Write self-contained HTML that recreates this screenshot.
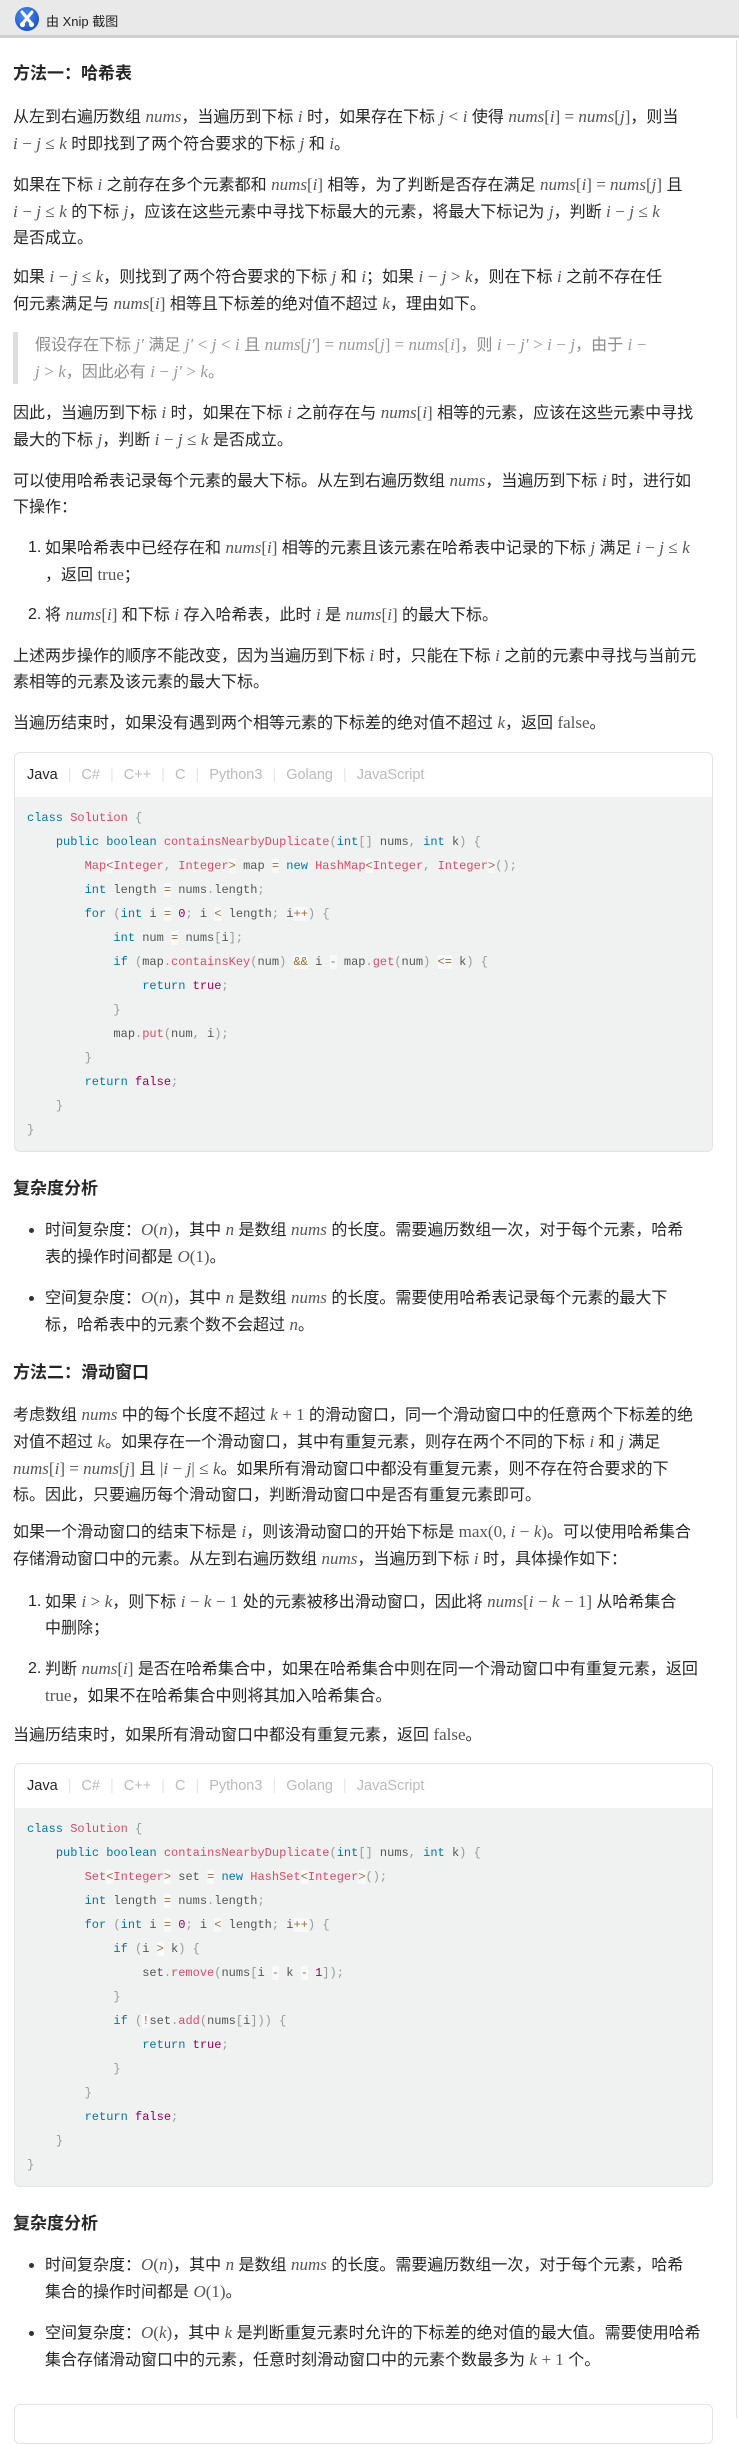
<!DOCTYPE html>
<html><head><meta charset="utf-8">
<style>
*{margin:0;padding:0;box-sizing:border-box}
body{width:739px;height:2418px;position:relative;background:#fff;font-family:"Liberation Sans","Noto Sans CJK SC",sans-serif;color:#262626;overflow:hidden}
.hdr{position:absolute;left:0;top:0;width:739px;height:38px;background:#e9e9e9;border-bottom:3px solid #cfcfcf}
.hdr .t{position:absolute;left:46px;top:11px;font-size:13px;color:#222}
.p{position:absolute;left:13px;font-size:16px;line-height:26px;white-space:nowrap}
.h{position:absolute;left:13px;font-size:17px;font-weight:bold;line-height:26px;white-space:nowrap}
.m{font-family:"Liberation Serif",serif;font-style:italic;color:#555;font-size:17px}
.r{font-family:"Liberation Serif",serif;color:#555;font-size:17px}
.bq{position:absolute;left:13px;width:5px;background:#ddd}
.bqt{color:#8c8c8c}
.bqt .m,.bqt .r{color:#999}
.cb{position:absolute;left:14px;width:699px;border:1px solid #e4e4e4;border-radius:6px;background:#f0f1f1;overflow:hidden}
.tabs{height:44px;background:#fff;font-size:14.5px;line-height:44px;padding-left:12px;color:#bbb;white-space:nowrap}
.tabs b{font-weight:normal;color:#262626}
.tabs i{font-style:normal;color:#e5e5e5;margin:0 10px}
.code{position:absolute;left:12px;font-family:"Liberation Mono","DejaVu Sans Mono",monospace;font-size:12px;line-height:24px;white-space:pre;color:#555}
.k{color:#07a}.c{color:#dd4a68}.n{color:#905}.o{color:#9a6e3a;background:rgba(255,255,255,.6)}.pu{color:#999}
.li{position:absolute;font-size:16px;line-height:26px;white-space:nowrap}
.num{position:absolute;left:28px;font-size:16px;line-height:26px}
.dot{position:absolute;left:29px;width:5px;height:5px;border-radius:50%;background:#333}
</style></head><body>
<div class="hdr">
<svg style="position:absolute;left:14px;top:6px" width="26" height="26" viewBox="0 0 26 26"><defs><radialGradient id="g" cx="40%" cy="35%" r="70%"><stop offset="0" stop-color="#4f8ff0"/><stop offset="1" stop-color="#1a4fc4"/></radialGradient></defs><circle cx="13" cy="13" r="12" fill="url(#g)"/><path d="M8 6 L17 17 M18 6 L9 17" stroke="#fff" stroke-width="3" stroke-linecap="round"/><circle cx="8.5" cy="18.5" r="2.6" fill="#fff"/><circle cx="17.5" cy="18.5" r="2.6" fill="#fff"/></svg>
<div class="t">由 Xnip 截图</div>
</div>

<div class="h" style="top:61px">方法一：哈希表</div>
<div class="p" style="top:104px">从左到右遍历数组 <span class="m">nums</span>，当遍历到下标 <span class="m">i</span> 时，如果存在下标 <span class="m">j</span> <span class="r">&lt;</span> <span class="m">i</span> 使得 <span class="m">nums</span><span class="r">[</span><span class="m">i</span><span class="r">] = </span><span class="m">nums</span><span class="r">[</span><span class="m">j</span><span class="r">]</span>，则当<br><span class="m">i</span> <span class="r">−</span> <span class="m">j</span> <span class="r">≤</span> <span class="m">k</span> 时即找到了两个符合要求的下标 <span class="m">j</span> 和 <span class="m">i</span>。</div>
<div class="p" style="top:172px">如果在下标 <span class="m">i</span> 之前存在多个元素都和 <span class="m">nums</span><span class="r">[</span><span class="m">i</span><span class="r">]</span> 相等，为了判断是否存在满足 <span class="m">nums</span><span class="r">[</span><span class="m">i</span><span class="r">] = </span><span class="m">nums</span><span class="r">[</span><span class="m">j</span><span class="r">]</span> 且<br><span class="m">i</span> <span class="r">−</span> <span class="m">j</span> <span class="r">≤</span> <span class="m">k</span> 的下标 <span class="m">j</span>，应该在这些元素中寻找下标最大的元素，将最大下标记为 <span class="m">j</span>，判断 <span class="m">i</span> <span class="r">−</span> <span class="m">j</span> <span class="r">≤</span> <span class="m">k</span><br>是否成立。</div>
<div class="p" style="top:264px">如果 <span class="m">i</span> <span class="r">−</span> <span class="m">j</span> <span class="r">≤</span> <span class="m">k</span>，则找到了两个符合要求的下标 <span class="m">j</span> 和 <span class="m">i</span>；如果 <span class="m">i</span> <span class="r">−</span> <span class="m">j</span> <span class="r">&gt;</span> <span class="m">k</span>，则在下标 <span class="m">i</span> 之前不存在任<br>何元素满足与 <span class="m">nums</span><span class="r">[</span><span class="m">i</span><span class="r">]</span> 相等且下标差的绝对值不超过 <span class="m">k</span>，理由如下。</div>
<div class="bq" style="top:332px;height:52px"></div>
<div class="p bqt" style="top:332px;left:35px">假设存在下标 <span class="m">j′</span> 满足 <span class="m">j′</span> <span class="r">&lt;</span> <span class="m">j</span> <span class="r">&lt;</span> <span class="m">i</span> 且 <span class="m">nums</span><span class="r">[</span><span class="m">j′</span><span class="r">] = </span><span class="m">nums</span><span class="r">[</span><span class="m">j</span><span class="r">] = </span><span class="m">nums</span><span class="r">[</span><span class="m">i</span><span class="r">]</span>，则 <span class="m">i</span> <span class="r">−</span> <span class="m">j′</span> <span class="r">&gt;</span> <span class="m">i</span> <span class="r">−</span> <span class="m">j</span>，由于 <span class="m">i</span> <span class="r">−</span><br><span class="m">j</span> <span class="r">&gt;</span> <span class="m">k</span>，因此必有 <span class="m">i</span> <span class="r">−</span> <span class="m">j′</span> <span class="r">&gt;</span> <span class="m">k</span>。</div>
<div class="p" style="top:400px">因此，当遍历到下标 <span class="m">i</span> 时，如果在下标 <span class="m">i</span> 之前存在与 <span class="m">nums</span><span class="r">[</span><span class="m">i</span><span class="r">]</span> 相等的元素，应该在这些元素中寻找<br>最大的下标 <span class="m">j</span>，判断 <span class="m">i</span> <span class="r">−</span> <span class="m">j</span> <span class="r">≤</span> <span class="m">k</span> 是否成立。</div>
<div class="p" style="top:468px">可以使用哈希表记录每个元素的最大下标。从左到右遍历数组 <span class="m">nums</span>，当遍历到下标 <span class="m">i</span> 时，进行如<br>下操作：</div>
<div class="num" style="top:535px">1.</div>
<div class="li" style="left:45px;top:535px">如果哈希表中已经存在和 <span class="m">nums</span><span class="r">[</span><span class="m">i</span><span class="r">]</span> 相等的元素且该元素在哈希表中记录的下标 <span class="m">j</span> 满足 <span class="m">i</span> <span class="r">−</span> <span class="m">j</span> <span class="r">≤</span> <span class="m">k</span><br>，返回 <span class="r">true</span>；</div>
<div class="num" style="top:602px">2.</div>
<div class="li" style="left:45px;top:602px">将 <span class="m">nums</span><span class="r">[</span><span class="m">i</span><span class="r">]</span> 和下标 <span class="m">i</span> 存入哈希表，此时 <span class="m">i</span> 是 <span class="m">nums</span><span class="r">[</span><span class="m">i</span><span class="r">]</span> 的最大下标。</div>
<div class="p" style="top:643px">上述两步操作的顺序不能改变，因为当遍历到下标 <span class="m">i</span> 时，只能在下标 <span class="m">i</span> 之前的元素中寻找与当前元<br>素相等的元素及该元素的最大下标。</div>
<div class="p" style="top:710px">当遍历结束时，如果没有遇到两个相等元素的下标差的绝对值不超过 <span class="m">k</span>，返回 <span class="r">false</span>。</div>

<div class="cb" style="top:752px;height:400px">
<div class="tabs"><b>Java</b><i>|</i>C#<i>|</i>C++<i>|</i>C<i>|</i>Python3<i>|</i>Golang<i>|</i>JavaScript</div>
<div class="code" style="top:53px"><span class="k">class</span> <span class="c">Solution</span> <span class="pu">{</span>
    <span class="k">public</span> <span class="k">boolean</span> <span class="c">containsNearbyDuplicate</span><span class="pu">(</span><span class="k">int</span><span class="pu">[]</span> nums<span class="pu">,</span> <span class="k">int</span> k<span class="pu">)</span> <span class="pu">{</span>
        <span class="c">Map</span><span class="o">&lt;</span><span class="c">Integer</span><span class="pu">,</span> <span class="c">Integer</span><span class="o">&gt;</span> map <span class="o">=</span> <span class="k">new</span> <span class="c">HashMap</span><span class="o">&lt;</span><span class="c">Integer</span><span class="pu">,</span> <span class="c">Integer</span><span class="o">&gt;</span><span class="pu">();</span>
        <span class="k">int</span> length <span class="o">=</span> nums<span class="pu">.</span>length<span class="pu">;</span>
        <span class="k">for</span> <span class="pu">(</span><span class="k">int</span> i <span class="o">=</span> <span class="n">0</span><span class="pu">;</span> i <span class="o">&lt;</span> length<span class="pu">;</span> i<span class="o">++</span><span class="pu">)</span> <span class="pu">{</span>
            <span class="k">int</span> num <span class="o">=</span> nums<span class="pu">[</span>i<span class="pu">];</span>
            <span class="k">if</span> <span class="pu">(</span>map<span class="pu">.</span><span class="c">containsKey</span><span class="pu">(</span>num<span class="pu">)</span> <span class="o">&amp;&amp;</span> i <span class="o">-</span> map<span class="pu">.</span><span class="c">get</span><span class="pu">(</span>num<span class="pu">)</span> <span class="o">&lt;=</span> k<span class="pu">)</span> <span class="pu">{</span>
                <span class="k">return</span> <span class="n">true</span><span class="pu">;</span>
            <span class="pu">}</span>
            map<span class="pu">.</span><span class="c">put</span><span class="pu">(</span>num<span class="pu">,</span> i<span class="pu">);</span>
        <span class="pu">}</span>
        <span class="k">return</span> <span class="n">false</span><span class="pu">;</span>
    <span class="pu">}</span>
<span class="pu">}</span></div>
</div>

<div class="h" style="top:1176px">复杂度分析</div>
<div class="dot" style="top:1228px"></div>
<div class="li" style="left:45px;top:1217px">时间复杂度：<span class="m">O</span><span class="r">(</span><span class="m">n</span><span class="r">)</span>，其中 <span class="m">n</span> 是数组 <span class="m">nums</span> 的长度。需要遍历数组一次，对于每个元素，哈希<br>表的操作时间都是 <span class="m">O</span><span class="r">(1)</span>。</div>
<div class="dot" style="top:1296px"></div>
<div class="li" style="left:45px;top:1285px">空间复杂度：<span class="m">O</span><span class="r">(</span><span class="m">n</span><span class="r">)</span>，其中 <span class="m">n</span> 是数组 <span class="m">nums</span> 的长度。需要使用哈希表记录每个元素的最大下<br>标，哈希表中的元素个数不会超过 <span class="m">n</span>。</div>

<div class="h" style="top:1360px">方法二：滑动窗口</div>
<div class="p" style="top:1402px">考虑数组 <span class="m">nums</span> 中的每个长度不超过 <span class="m">k</span> <span class="r">+ 1</span> 的滑动窗口，同一个滑动窗口中的任意两个下标差的绝<br>对值不超过 <span class="m">k</span>。如果存在一个滑动窗口，其中有重复元素，则存在两个不同的下标 <span class="m">i</span> 和 <span class="m">j</span> 满足<br><span class="m">nums</span><span class="r">[</span><span class="m">i</span><span class="r">] = </span><span class="m">nums</span><span class="r">[</span><span class="m">j</span><span class="r">]</span> 且 <span class="r">|</span><span class="m">i</span> <span class="r">−</span> <span class="m">j</span><span class="r">|</span> <span class="r">≤</span> <span class="m">k</span>。如果所有滑动窗口中都没有重复元素，则不存在符合要求的下<br>标。因此，只要遍历每个滑动窗口，判断滑动窗口中是否有重复元素即可。</div>
<div class="p" style="top:1519px">如果一个滑动窗口的结束下标是 <span class="m">i</span>，则该滑动窗口的开始下标是 <span class="r">max(0, </span><span class="m">i</span> <span class="r">−</span> <span class="m">k</span><span class="r">)</span>。可以使用哈希集合<br>存储滑动窗口中的元素。从左到右遍历数组 <span class="m">nums</span>，当遍历到下标 <span class="m">i</span> 时，具体操作如下：</div>
<div class="num" style="top:1589px">1.</div>
<div class="li" style="left:45px;top:1589px">如果 <span class="m">i</span> <span class="r">&gt;</span> <span class="m">k</span>，则下标 <span class="m">i</span> <span class="r">−</span> <span class="m">k</span> <span class="r">− 1</span> 处的元素被移出滑动窗口，因此将 <span class="m">nums</span><span class="r">[</span><span class="m">i</span> <span class="r">−</span> <span class="m">k</span> <span class="r">− 1]</span> 从哈希集合<br>中删除；</div>
<div class="num" style="top:1656px">2.</div>
<div class="li" style="left:45px;top:1656px">判断 <span class="m">nums</span><span class="r">[</span><span class="m">i</span><span class="r">]</span> 是否在哈希集合中，如果在哈希集合中则在同一个滑动窗口中有重复元素，返回<br><span class="r">true</span>，如果不在哈希集合中则将其加入哈希集合。</div>
<div class="p" style="top:1722px">当遍历结束时，如果所有滑动窗口中都没有重复元素，返回 <span class="r">false</span>。</div>

<div class="cb" style="top:1763px;height:424px">
<div class="tabs"><b>Java</b><i>|</i>C#<i>|</i>C++<i>|</i>C<i>|</i>Python3<i>|</i>Golang<i>|</i>JavaScript</div>
<div class="code" style="top:53px"><span class="k">class</span> <span class="c">Solution</span> <span class="pu">{</span>
    <span class="k">public</span> <span class="k">boolean</span> <span class="c">containsNearbyDuplicate</span><span class="pu">(</span><span class="k">int</span><span class="pu">[]</span> nums<span class="pu">,</span> <span class="k">int</span> k<span class="pu">)</span> <span class="pu">{</span>
        <span class="c">Set</span><span class="o">&lt;</span><span class="c">Integer</span><span class="o">&gt;</span> set <span class="o">=</span> <span class="k">new</span> <span class="c">HashSet</span><span class="o">&lt;</span><span class="c">Integer</span><span class="o">&gt;</span><span class="pu">();</span>
        <span class="k">int</span> length <span class="o">=</span> nums<span class="pu">.</span>length<span class="pu">;</span>
        <span class="k">for</span> <span class="pu">(</span><span class="k">int</span> i <span class="o">=</span> <span class="n">0</span><span class="pu">;</span> i <span class="o">&lt;</span> length<span class="pu">;</span> i<span class="o">++</span><span class="pu">)</span> <span class="pu">{</span>
            <span class="k">if</span> <span class="pu">(</span>i <span class="o">&gt;</span> k<span class="pu">)</span> <span class="pu">{</span>
                set<span class="pu">.</span><span class="c">remove</span><span class="pu">(</span>nums<span class="pu">[</span>i <span class="o">-</span> k <span class="o">-</span> <span class="n">1</span><span class="pu">]);</span>
            <span class="pu">}</span>
            <span class="k">if</span> <span class="pu">(</span><span class="o">!</span>set<span class="pu">.</span><span class="c">add</span><span class="pu">(</span>nums<span class="pu">[</span>i<span class="pu">]))</span> <span class="pu">{</span>
                <span class="k">return</span> <span class="n">true</span><span class="pu">;</span>
            <span class="pu">}</span>
        <span class="pu">}</span>
        <span class="k">return</span> <span class="n">false</span><span class="pu">;</span>
    <span class="pu">}</span>
<span class="pu">}</span></div>
</div>

<div class="h" style="top:2211px">复杂度分析</div>
<div class="dot" style="top:2263px"></div>
<div class="li" style="left:45px;top:2252px">时间复杂度：<span class="m">O</span><span class="r">(</span><span class="m">n</span><span class="r">)</span>，其中 <span class="m">n</span> 是数组 <span class="m">nums</span> 的长度。需要遍历数组一次，对于每个元素，哈希<br>集合的操作时间都是 <span class="m">O</span><span class="r">(1)</span>。</div>
<div class="dot" style="top:2331px"></div>
<div class="li" style="left:45px;top:2320px">空间复杂度：<span class="m">O</span><span class="r">(</span><span class="m">k</span><span class="r">)</span>，其中 <span class="m">k</span> 是判断重复元素时允许的下标差的绝对值的最大值。需要使用哈希<br>集合存储滑动窗口中的元素，任意时刻滑动窗口中的元素个数最多为 <span class="m">k</span> <span class="r">+ 1</span> 个。</div>

<div class="cb" style="top:2404px;height:40px;background:#fff"></div>
<div style="position:absolute;left:736px;top:40px;width:1px;height:2378px;background:#e0e0e0"></div>
</body></html>
